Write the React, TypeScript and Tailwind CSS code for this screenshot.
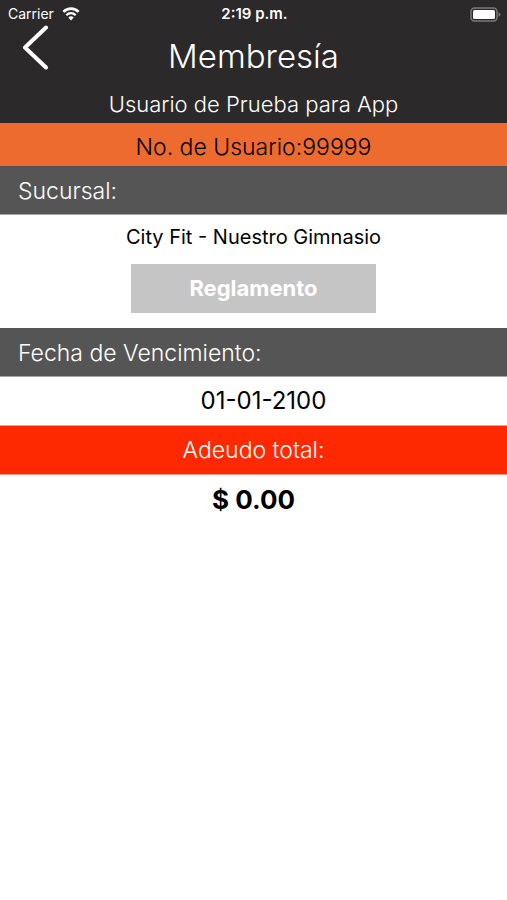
import type { ReactNode } from 'react'

const membership = {
  name: 'Usuario de Prueba para App',
  userNumber: '99999',
  branch: 'City Fit - Nuestro Gimnasio',
  expiration: '01-01-2100',
  balance: '$ 0.00',
}

function StatusBar() {
  return (
    <div className="grid h-7 grid-cols-3 items-center pr-1.5 pl-2 text-white">
      <div className="flex items-center gap-2 text-sm">
        <span>Carrier</span>
        <svg width="18" height="14" viewBox="0 0 20 15" fill="none" aria-hidden="true">
          <path d="M1.6 5.2a11.6 11.6 0 0 1 16.8 0" stroke="white" strokeWidth="3" />
          <path d="M4.8 8.8a7.3 7.3 0 0 1 10.4 0" stroke="white" strokeWidth="2.5" />
          <path d="M10 14.6 7 11.5a4.2 4.2 0 0 1 6 0z" fill="white" />
        </svg>
      </div>
      <time className="text-center text-[15px] font-semibold">2:19 p.m.</time>
      <svg className="justify-self-end" width="31" height="15" viewBox="0 0 31 15" aria-hidden="true">
        <rect x="1" y="1" width="26" height="13" rx="3.5" fill="#2b292a" stroke="#7b797a" strokeWidth="1.5" />
        <rect x="3" y="3" width="22" height="9" rx="1.5" fill="white" />
        <path d="M28.5 5.2c2.6 1 2.6 3.6 0 4.6z" fill="#7b797a" />
      </svg>
    </div>
  )
}

function SectionLabel({ children }: { children: ReactNode }) {
  return (
    <h2 className="flex h-[49px] items-center border-b border-[#a5a5a5] bg-[#555555] px-[18px] pt-0.5 text-[23px] font-light text-white">
      {children}
    </h2>
  )
}

export default function App() {
  return (
    <main className="min-h-screen w-full bg-white font-['Inter','Liberation_Sans',sans-serif] text-black">
      <header className="bg-[#2b292a] text-white">
        <StatusBar />
        <div className="grid grid-cols-[64px_1fr_64px] items-center">
          <button type="button" aria-label="Regresar" className="-mt-4 pl-[22px]">
            <svg width="27" height="46" viewBox="0 0 27 46" fill="none" aria-hidden="true">
              <path d="M24 2.5 3 22.5 24 42.5" stroke="white" strokeWidth="4" strokeLinecap="round" strokeLinejoin="round" />
            </svg>
          </button>
          <h1 className="text-center text-[33px] leading-[56px] font-light">Membresía</h1>
        </div>
        <p className="pt-0.5 text-center text-[22px] leading-[37px] font-light">{membership.name}</p>
      </header>

      <p className="bg-[#ed6b2f] pt-1.5 text-center text-[23px] leading-[37px] font-light">
        No. de Usuario:{membership.userNumber}
      </p>

      <section>
        <SectionLabel>Sucursal:</SectionLabel>
        <div className="flex flex-col items-center pb-[15px]">
          <p className="pb-1 text-xl leading-[45px]">{membership.branch}</p>
          <button type="button" className="h-[49px] w-[245px] bg-[#c5c5c5] text-[22px] font-bold text-white">
            Reglamento
          </button>
        </div>
      </section>

      <section>
        <SectionLabel>Fecha de Vencimiento:</SectionLabel>
        <p className="pl-5 text-center text-2xl leading-[48px]">{membership.expiration}</p>
      </section>

      <section className="text-center">
        <h2 className="border-y border-[#ff9c8a] bg-[#ff2900] text-[23px] leading-[48px] font-light text-white">
          Adeudo total:
        </h2>
        <p className="text-[26px] leading-[50px] font-bold">{membership.balance}</p>
      </section>
    </main>
  )
}
